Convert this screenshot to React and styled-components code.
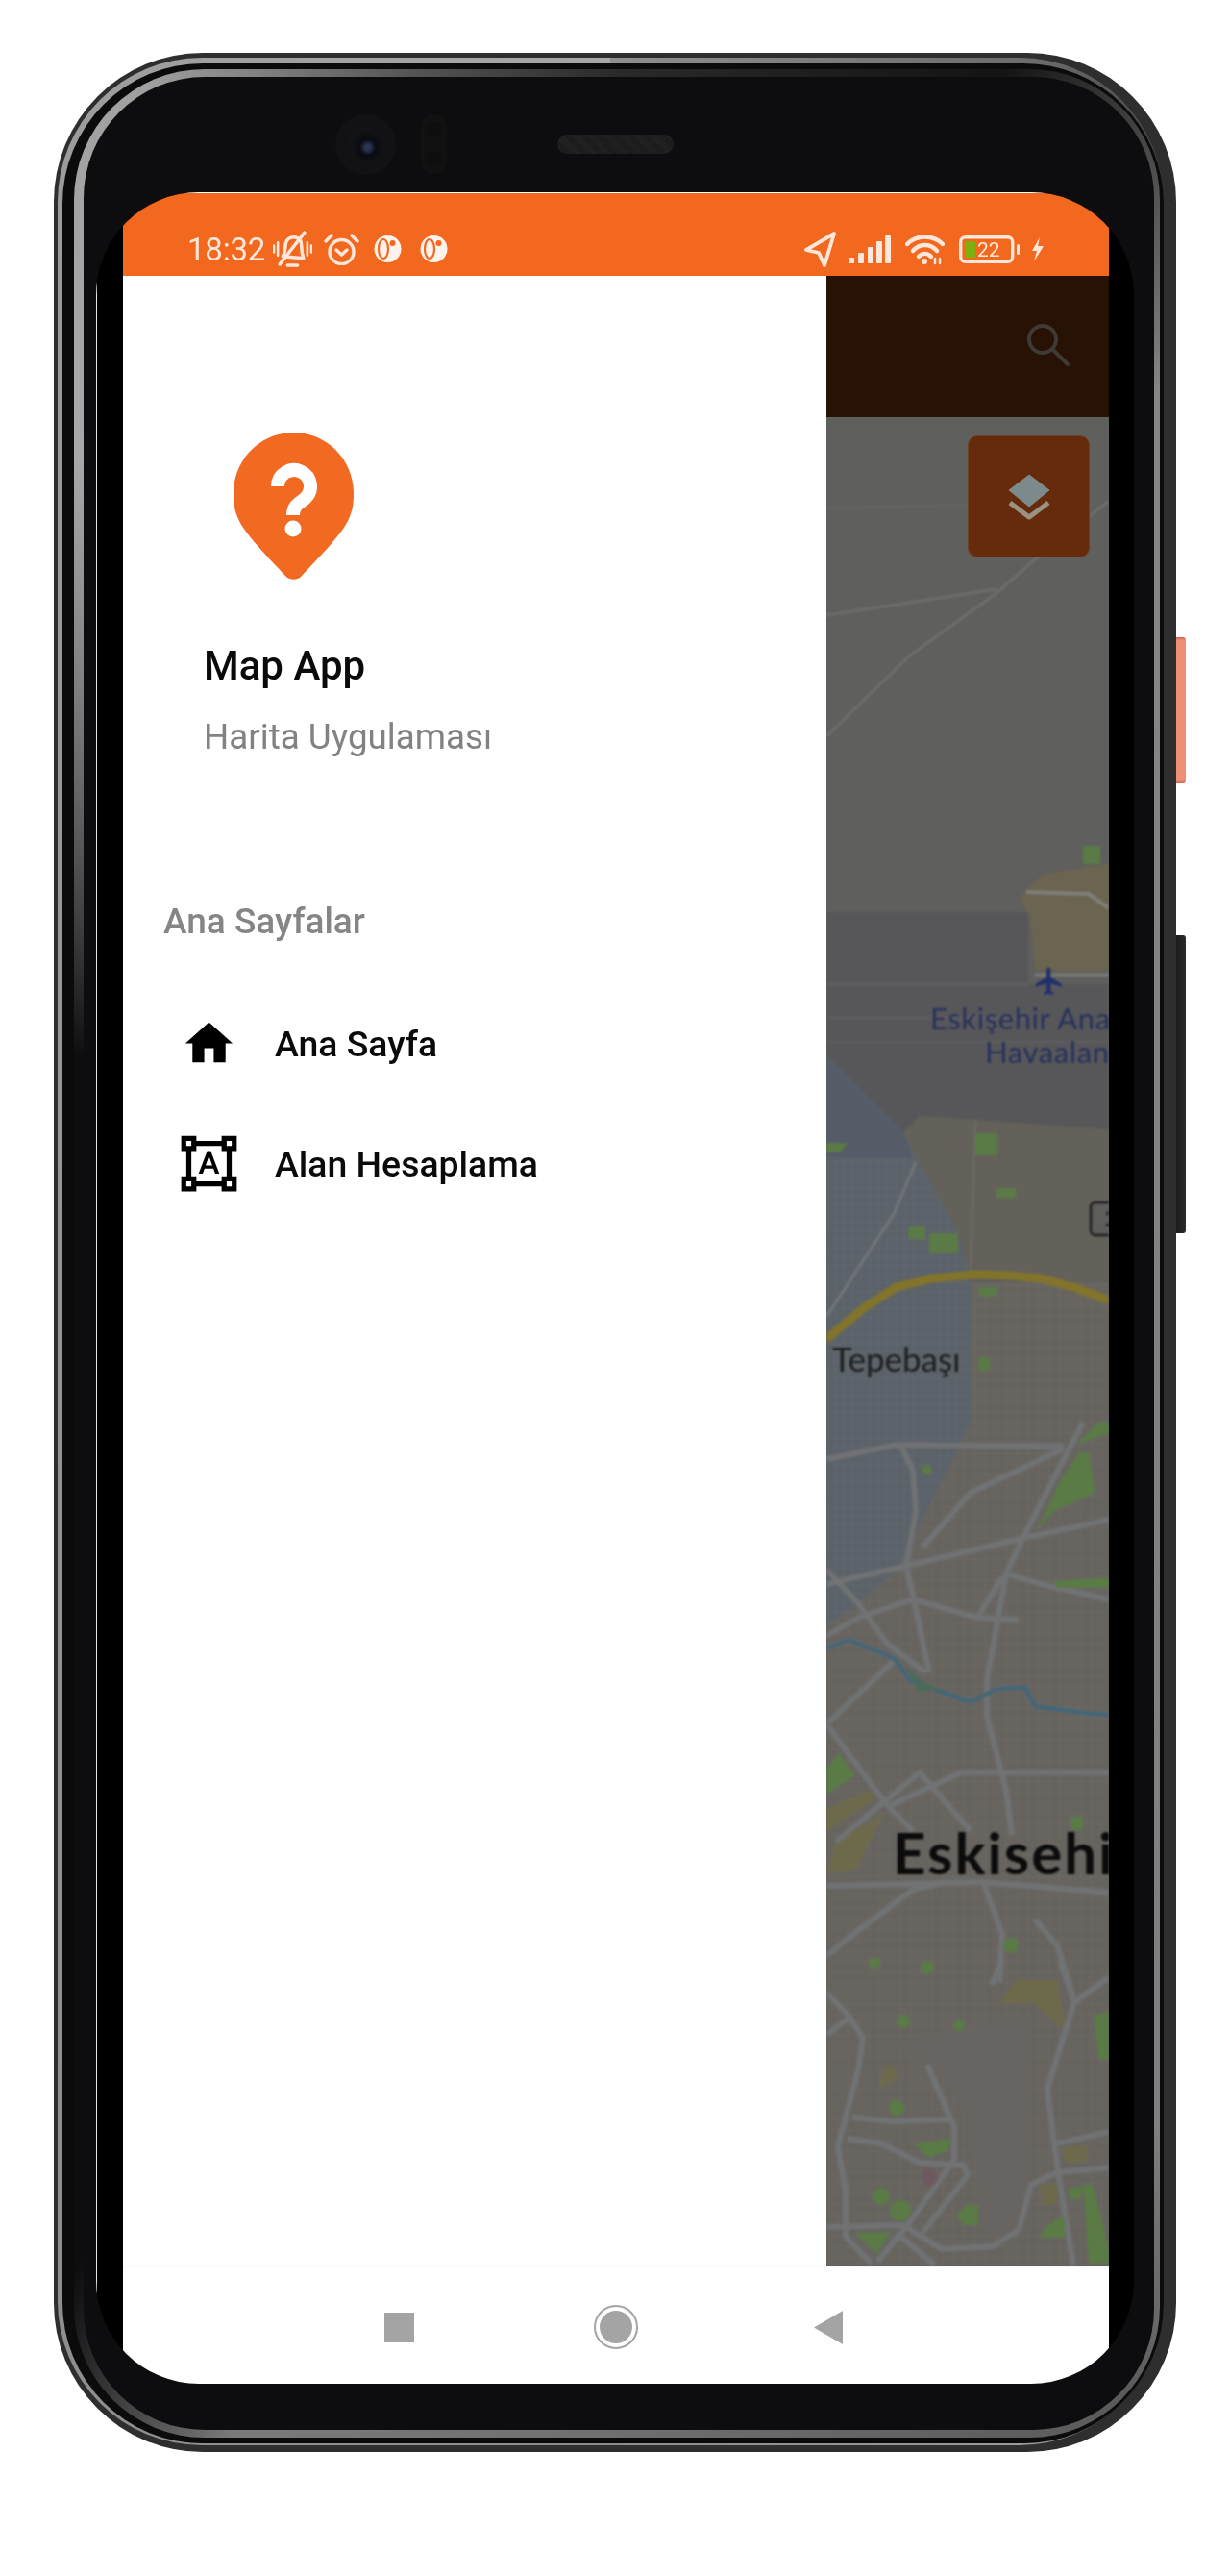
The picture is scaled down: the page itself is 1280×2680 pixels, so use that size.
import React from "react";
import styled, { createGlobalStyle } from "styled-components";

const GlobalStyle = createGlobalStyle`
  html, body {
    margin: 0;
    padding: 0;
    background: #fff;
    font-family: Roboto, "Liberation Sans", sans-serif;
  }
  * { box-sizing: border-box; }
`;

const Page = styled.div`
  width: 1280px;
  height: 2680px;
  padding: 55px 0 0 56px;
  overflow: hidden;
`;

/* phone body: nested rings, each with its own thickness per side */
const Shell = styled.div`
  position: relative;
  width: 1168px;
  height: 2496px;
  padding: 5px 13px 7px 4px;
  border-radius: 155px;
  background: #2e2e2e;
`;
const OuterChrome = styled.div`
  height: 100%;
  padding: 6px 0 2px 5px;
  border-radius: 150px;
  background: conic-gradient(
    #8f8f8f 0deg,
    #6a6a6a 20deg,
    #2e2e2e 30deg,
    #2e2e2e 150deg,
    #9a9a9a 160deg,
    #8c8c8c 180deg,
    #9a9a9a 330deg,
    #a8a8a8 360deg
  );
`;
const DarkRing = styled.div`
  height: 100%;
  padding: 6px 4px 6px 12px;
  border-radius: 146px;
  background: #0b0b0c;
`;
const InnerChrome = styled.div`
  height: 100%;
  padding: 8px 6px 8px 10px;
  border-radius: 136px;
  background: conic-gradient(
    #2a2a2a 0deg,
    #141414 18deg,
    #4a4a4a 26deg,
    #858585 32deg,
    #808080 148deg,
    #5a5a5a 156deg,
    #6f6f6f 180deg,
    #7a7a7a 198deg,
    #0d0d0f 208deg,
    #0d0d0f 290deg,
    #a8a8a8 326deg,
    #a0a0a0 338deg,
    #555 350deg,
    #2a2a2a 360deg
  );
`;
const Bezel = styled.div`
  height: 100%;
  padding: 0 21px 48px 13px;
  border-radius: 126px;
  background: #0d0d0f;
`;

const SideKey = styled.div`
  position: absolute;
  left: 100%;
  top: ${(p) => p.$top}px;
  width: 10px;
  height: ${(p) => p.$height}px;
  border-radius: 0 3px 3px 0;
  background: ${(p) => p.$bg};
`;

const TopBar = styled.div`
  display: flex;
  align-items: center;
  height: 120px;
  padding: 20px 0 0 249px;
`;
const CameraHousing = styled.div`
  display: flex;
  align-items: center;
  justify-content: center;
  width: 63px;
  height: 63px;
  border-radius: 50%;
  background: #121214;
`;
const Lens = styled.div`
  width: 34px;
  height: 34px;
  border-radius: 50%;
  background: radial-gradient(circle at 55% 60%, #2a3555 0 10%, #0a0b10 30%, #1b1b20 100%);
`;
const Sensor = styled.div`
  display: flex;
  flex-direction: column;
  align-items: center;
  justify-content: space-around;
  width: 27px;
  height: 62px;
  margin-left: 26px;
  border-radius: 14px;
  background: #111112;
`;
const SensorDot = styled.div`
  width: 16px;
  height: 16px;
  border-radius: 50%;
  background: #0e0e0f;
`;
const Speaker = styled.div`
  width: 121px;
  height: 20px;
  margin-left: 115px;
  border-radius: 10px;
  background: repeating-linear-gradient(45deg, #232323 0 1px, #191919 1px 2px);
`;

const Display = styled.div`
  width: 1080px;
  height: 2280px;
  padding: 0 26px 0 28px;
  border-radius: 107px;
  overflow: hidden;
  background: linear-gradient(#e6e6e6, #e6e6e6) 0 0 / 1px 100% no-repeat, #000;
`;
const Screen = styled.div`
  display: flex;
  flex-direction: column;
  height: 100%;
  background: #fff;
  filter: blur(0.5px);
`;

const StatusBar = styled.div`
  display: flex;
  align-items: center;
  flex: 0 0 87px;
  padding: 30px 67px 0 67px;
  border-top: 1px solid #fff;
  background: #f3681f;
  color: #fde7db;
`;
const Clock = styled.span`
  font-size: 33px;
  line-height: 1;
  width: 78px;
  letter-spacing: -0.2px;
`;
const StatusIcon = styled.svg`
  flex: none;
  display: block;
  margin-left: ${(p) => p.$gap}px;
  fill: none;
  stroke: #fde7db;
  stroke-linecap: round;
  stroke-linejoin: round;
`;
const StatusSpacer = styled.div`
  flex: 1;
`;

const Body = styled.div`
  display: flex;
  flex: 1;
  min-height: 0;
`;

const Drawer = styled.aside`
  flex: 0 0 732px;
  padding-top: 163px;
  background: #fff;
`;
const Logo = styled.svg`
  display: block;
  margin-left: 115px;
`;
const AppName = styled.div`
  margin: 65px 0 0 84px;
  font-size: 42px;
  line-height: 50px;
  font-weight: 500;
  color: #0a0a0a;
`;
const AppTagline = styled.div`
  margin: 27px 0 0 84px;
  font-size: 36.8px;
  line-height: 44px;
  color: #828282;
`;
const SectionLabel = styled.div`
  margin: 148px 0 42px 42px;
  font-size: 37px;
  line-height: 44px;
  font-weight: 500;
  color: #858585;
`;
const NavItem = styled.div`
  display: flex;
  align-items: center;
  height: 125px;
  padding-left: 59px;
  font-size: 37.4px;
  font-weight: 500;
  color: #0a0a0a;
`;
const NavIconSlot = styled.div`
  display: flex;
  align-items: center;
  justify-content: center;
  flex: 0 0 60px;
  min-width: 0;
  margin-right: 39px;
`;
const NavGlyph = styled.svg`
  display: block;
  flex: none;
  fill: #000;
`;

const Backdrop = styled.div`
  display: flex;
  flex-direction: column;
  flex: 1;
  min-width: 0;
`;
const MapHeader = styled.div`
  display: flex;
  align-items: flex-start;
  justify-content: flex-end;
  flex: 0 0 147px;
  padding: 48px 37px 0 0;
  background: #281206;
`;
const SearchGlyph = styled.svg`
  display: block;
  fill: none;
  stroke: #3f3a35;
  stroke-width: 4;
  stroke-linecap: round;
`;
const MapArea = styled.div`
  position: relative;
  flex: 1;
  overflow: hidden;
  background: #5f5f5d;
`;
const MapCanvas = styled.svg`
  display: block;
  filter: blur(0.8px);
`;
const LayerButton = styled.div`
  position: absolute;
  top: 20px;
  right: 21px;
  display: flex;
  align-items: center;
  justify-content: center;
  width: 125px;
  height: 125px;
  border-radius: 9px;
  background: #652b0c;
  box-shadow: 0 0 0 1px #6e4024;
`;
const PlaceLabel = styled.text`
  font-family: Lato, "Noto Sans", sans-serif;
  font-size: ${(p) => p.$size}px;
  font-weight: ${(p) => p.$weight || 400};
  letter-spacing: ${(p) => p.$spacing || 0}px;
  fill: ${(p) => p.$color};
`;

const SystemBar = styled.div`
  display: flex;
  align-items: center;
  flex: 0 0 123px;
  padding: 3px 0 0 272px;
  border-top: 2px solid #f8f8f8;
  background: #fff;
`;
const StopKey = styled.div`
  width: 31px;
  height: 31px;
  background: #a4a4a4;
`;
const HomeKey = styled.div`
  display: flex;
  align-items: center;
  justify-content: center;
  width: 46px;
  height: 46px;
  margin-left: 187px;
  border-radius: 50%;
  border: 2px solid #a4a4a4;
`;
const HomeKeyDot = styled.div`
  width: 34px;
  height: 34px;
  border-radius: 50%;
  background: #a4a4a4;
`;
const BackKey = styled.svg`
  display: block;
  margin-left: 183px;
  fill: #a4a4a4;
`;

const majorRoads = [
  "0,1084 73,1069 247,1071",
  "77,1069 90,1096 93,1138 83,1195 90,1226 107,1306",
  "267,1046 207,1161 187,1203 167,1314 167,1352 187,1429 193,1475",
  "247,1073 150,1119 100,1176",
  "0,1214 83,1195 197,1168 294,1147",
  "187,1203 223,1214 294,1230",
  "183,1207 157,1249",
  "90,1230 157,1249 200,1251",
  "0,1268 33,1249 90,1230",
  "0,1199 33,1234 63,1276 103,1306",
  "0,1360 73,1291",
  "0,1360 63,1444 90,1471",
  "10,1482 97,1410 150,1471",
  "67,1444 140,1410 294,1410",
  "0,1528 163,1524 294,1535",
  "163,1524 183,1578 180,1628",
  "0,1601 23,1582 90,1532 123,1524",
  "217,1563 240,1590 257,1643",
  "0,1639 23,1663 38,1686 33,1719 20,1769 12,1799 20,1846 20,1893 47,1921",
  "0,1683 23,1666",
  "27,1769 70,1773 127,1771",
  "105,1714 133,1779 133,1813 83,1883 53,1919",
  "22,1791 57,1796 97,1816 143,1819 147,1829 100,1889",
  "0,1883 80,1881 120,1906 173,1903 200,1886 213,1839 240,1826 294,1821",
  "243,1606 258,1649 230,1739 240,1819 257,1923",
  "258,1649 294,1623",
  "240,1796 294,1784",
  "183,1606 172,1631",
  "73,1889 113,1923",
];

const parks = [
  "263,1077 273,1077 280,1119 237,1138 220,1157 243,1107",
  "283,1046 294,1046 294,1057 260,1069",
  "237,1211 294,1207 294,1218 240,1218",
  "0,1406 13,1390 30,1413 0,1433",
  "90,1796 130,1791 127,1803 107,1811",
  "135,1871 147,1859 158,1861 158,1881 143,1881",
  "30,1889 67,1888 52,1911",
  "267,1839 277,1838 294,1906 294,1921 273,1921",
  "278,1663 294,1658 294,1709 283,1709",
  "252,1843 267,1841 265,1853 253,1855",
  "237,1876 248,1873 248,1894 223,1894 223,1889",
  "267,446 285,446 285,465 267,465",
  "155,745 178,745 178,768 155,768",
  "177,802 197,802 197,812 177,812",
  "85,842 103,842 103,855 85,855",
  "107,849 137,849 137,870 107,870",
  "158,905 180,905 175,915 160,915",
  "158,978 170,978 170,992 158,992",
  "0,755 22,755 15,765 0,765",
  "255,1456 267,1456 267,1470 255,1470",
];

const parkDots = [
  [80, 1669, 7],
  [138, 1673, 6],
  [73, 1759, 8],
  [57, 1851, 9],
  [77, 1866, 11],
  [105, 1613, 7],
  [50, 1608, 6],
  [192, 1590, 8],
  [105, 1095, 5],
];

const oliveAreas = [
  "0,1448 43,1429 53,1436 0,1471",
  "10,1482 60,1452 30,1512 0,1515",
  "197,1626 240,1626 250,1680 215,1650 180,1650",
  "60,1715 72,1716 73,1730 55,1738",
  "222,1840 240,1838 240,1860 225,1860",
  "245,1800 272,1798 272,1814 248,1816",
];

const SearchIcon = () => (
  <SearchGlyph width="50" height="50" viewBox="0 0 50 50">
    <circle cx="18" cy="18" r="14" />
    <line x1="28" y1="28" x2="44" y2="44" />
  </SearchGlyph>
);

const LayersIcon = () => (
  <svg width="44" height="48" viewBox="0 0 44 48">
    <polygon points="22,1 43,17 22,34 1,17" fill="#7d8a8b" stroke="#7d8a8b" strokeLinejoin="round" />
    <polyline points="2,30 22,45 42,30" fill="none" stroke="#9c9284" strokeWidth="5" strokeLinejoin="round" />
  </svg>
);

const CallIndicator = ({ gap }) => (
  <StatusIcon $gap={gap} width="31" height="28" viewBox="0 0 31 28" strokeWidth="0">
    <circle cx="15.5" cy="14" r="14" fill="#fdf3ec" />
    <ellipse cx="11" cy="14" rx="5" ry="10" fill="#fdf3ec" stroke="#f3681f" strokeWidth="2.2" />
    <circle cx="20.5" cy="8" r="3" fill="#f3681f" />
  </StatusIcon>
);

const MapDrawing = () => (
  <MapCanvas width="294" height="1923" viewBox="0 0 294 1923">
    <defs>
      <pattern id="tan-streets" width="11" height="11" patternUnits="userSpaceOnUse">
        <rect width="11" height="11" fill="#676460" />
        <path d="M0 0H11M0 0V11" stroke="#726f6b" strokeWidth="1" />
      </pattern>
      <pattern id="blue-streets" width="9" height="9" patternUnits="userSpaceOnUse">
        <rect width="9" height="9" fill="#5b6269" />
        <path d="M0 0H9M0 0V9" stroke="#686d72" strokeWidth="1" />
      </pattern>
    </defs>
    {/* open land, airport and terminal */}
    <polygon points="0,515 210,515 210,590 294,590 294,741 97,727 80,744 0,664" fill="#57575a" />
    <polygon points="200,500 225,475 294,465 294,576 217,576 212,520" fill="#6a6450" />
    <line x1="0" y1="590" x2="210" y2="590" stroke="#606064" strokeWidth="3" />
    <line x1="0" y1="625" x2="210" y2="625" stroke="#5e5e62" strokeWidth="3" />
    <line x1="0" y1="650" x2="294" y2="650" stroke="#5e5e62" strokeWidth="2" />
    <polygon points="97,727 294,741 294,900 150,894 137,848 80,744" fill="#64615a" />
    <rect x="0" y="900" width="294" height="1023" fill="url(#tan-streets)" />
    <polygon points="0,664 80,744 137,848 150,894 150,1046 140,1069 73,1199 30,1237 0,1256" fill="url(#blue-streets)" />
    <polygon points="0,664 80,744 90,770 0,770" fill="#555c68" />
    <polygon points="67,1690 213,1663 213,1885 165,1890 150,1770 105,1710" fill="#686461" />

    {/* thin upper tracks */}
    <polyline points="0,95 147,91" fill="none" stroke="#666664" strokeWidth="2" />
    <polyline points="0,206 177,179" fill="none" stroke="#6d6d6b" strokeWidth="3" />
    <polyline points="0,332 87,248 177,183 217,148 294,87" fill="none" stroke="#6d6d6b" strokeWidth="3" />
    <polyline points="208,494 273,496 294,511" fill="none" stroke="#7f7f7a" strokeWidth="4" />
    <polyline points="217,580 294,580" fill="none" stroke="#7a7a76" strokeWidth="3" />
    <polyline points="93,775 70,829 0,936" fill="none" stroke="#737578" strokeWidth="3" />
    <polyline points="155,730 150,890" fill="none" stroke="#6e6b65" strokeWidth="2" />

    {oliveAreas.map((points) => (
      <polygon key={points} points={points} fill="#6d6a4c" />
    ))}
    {majorRoads.map((points) => (
      <polyline key={points} points={points} fill="none" stroke="#707274" strokeWidth="6" strokeLinejoin="round" />
    ))}
    {parks.map((points) => (
      <polygon key={points} points={points} fill="#5a7a46" />
    ))}
    {parkDots.map(([cx, cy, r]) => (
      <circle key={`${cx}-${cy}`} cx={cx} cy={cy} r={r} fill="#5a7a46" />
    ))}
    <circle cx="107" cy="1831" r="9" fill="#6d5a60" />

    {/* river */}
    <polyline
      points="0,1281 23,1272 70,1291 87,1314 117,1325 150,1337 177,1323 207,1322 217,1341 267,1348 294,1350"
      fill="none"
      stroke="#40677a"
      strokeWidth="4"
      strokeLinejoin="round"
    />
    <polygon points="83,1300 100,1315 120,1325 95,1325" fill="#4a6a5c" />

    {/* ring road */}
    <polyline points="0,959 40,926 73,905 110,896 153,892 190,893 223,896 260,906 294,919" fill="none" stroke="#82742a" strokeWidth="9" strokeLinejoin="round" />

    {/* road shield, cut off by the screen edge */}
    <rect x="275" y="817" width="30" height="34" rx="5" fill="#5d5d5c" stroke="#1d1d1d" strokeWidth="2.5" />
    <PlaceLabel x="290" y="842" $size={22} $weight={700} $color="#1d1d1d">2</PlaceLabel>

    {/* airport */}
    <svg x="215" y="570" width="34" height="34" viewBox="0 0 24 24">
      <path
        fill="#1f2f6d"
        d="M21 16v-2l-8-5V3.5c0-.83-.67-1.5-1.5-1.5S10 2.67 10 3.5V9l-8 5v2l8-2.5V19l-2 1.5V22l3.5-1 3.5 1v-1.5L13 19v-5.5l8 2.5z"
      />
    </svg>
    <PlaceLabel x="108" y="637" $size={31} $spacing={0.6} $color="#27315c">Eskişehir Ana</PlaceLabel>
    <PlaceLabel x="165" y="672" $size={31} $spacing={0.6} $color="#27315c">Havaalan</PlaceLabel>
    <PlaceLabel x="6" y="993" $size={35} $color="#1d1d1d">Tepebaşı</PlaceLabel>
    <PlaceLabel x="69" y="1516" $size={60} $weight={700} $spacing={2} $color="#0b0b0b">Eskisehi</PlaceLabel>
  </MapCanvas>
);

const App = () => (
  <>
    <GlobalStyle />
    <Page>
      <Shell>
        <SideKey $top={608} $height={152} $bg="linear-gradient(#c9614a 0, #ef8f74 2%, #ef8f74 98%, #c9614a 100%)" />
        <SideKey $top={918} $height={310} $bg="linear-gradient(90deg, #1d1d1d, #2c2c2c)" />
        <OuterChrome>
          <DarkRing>
            <InnerChrome>
              <Bezel>
                <TopBar>
                  <CameraHousing>
                    <Lens />
                  </CameraHousing>
                  <Sensor>
                    <SensorDot />
                    <SensorDot />
                  </Sensor>
                  <Speaker />
                </TopBar>
                <Display>
                  <Screen>
                    <StatusBar>
                      <Clock>18:32</Clock>
                      <StatusIcon $gap={11} width="41" height="38" viewBox="0 0 40 37" strokeWidth="3.4">
                        <path d="M10 26 C14 20 11 13 15 9 C19 5 25 6 28 10 C30 14 28 20 31 28 Z" />
                        <line x1="7" y1="34" x2="32" y2="2" />
                        <line x1="15" y1="35" x2="25" y2="35" />
                        <path d="M1 15V22M5 12V25M35 12V25M39 15V22" strokeWidth="2.5" />
                      </StatusIcon>
                      <StatusIcon $gap={12} width="37" height="34" viewBox="0 0 37 34" strokeWidth="3.4">
                        <circle cx="18.5" cy="20" r="12.5" />
                        <path d="M2 9L8 3M29 3L35 9" />
                        <path d="M13 18L18.5 23L24 18" />
                      </StatusIcon>
                      <CallIndicator gap={14} />
                      <CallIndicator gap={17} />
                      <StatusSpacer />
                      <StatusIcon $gap={0} width="33" height="37" viewBox="0 0 33 37" strokeWidth="3.8">
                        <polygon points="31,2 2,19 15,22 21,35" />
                      </StatusIcon>
                      <StatusIcon $gap={13} width="44" height="29" viewBox="0 0 44 29" strokeWidth="0">
                        <g fill="#fde7db">
                          <rect x="0" y="23" width="6" height="6" rx="1" />
                          <rect x="10" y="18" width="6" height="11" rx="1" />
                          <rect x="20" y="12" width="6" height="17" rx="1" />
                          <rect x="29" y="6" width="6" height="23" rx="1" />
                          <rect x="38" y="0" width="6" height="29" rx="1" />
                        </g>
                      </StatusIcon>
                      <StatusIcon $gap={15} width="41" height="33" viewBox="0 0 41 33" strokeWidth="4.4">
                        <path d="M2 11C12 1 29 1 39 11" />
                        <path d="M8 18C15 10 26 10 33 18" />
                        <path d="M14 24C18 20 23 20 27 24" />
                        <circle cx="20" cy="29" r="3" fill="#fde7db" strokeWidth="0" />
                        <path d="M31 26V31M36 26V31" strokeWidth="2.5" />
                      </StatusIcon>
                      <StatusIcon $gap={15} width="65" height="29" viewBox="0 0 65 29" strokeWidth="3.4">
                        <rect x="1.7" y="1.7" width="54" height="25.6" rx="5" />
                        <rect x="6" y="6" width="11" height="17" fill="#7db00e" strokeWidth="0" />
                        <text x="19" y="22" fontFamily="Roboto, sans-serif" fontSize="21" fill="#fde7db" strokeWidth="0">
                          22
                        </text>
                        <rect x="60" y="9" width="3" height="11" rx="1.5" fill="#fde7db" strokeWidth="0" />
                      </StatusIcon>
                      <StatusIcon $gap={9} width="15" height="25" viewBox="0 0 15 25" strokeWidth="0">
                        <polygon points="10,0 2,14 7,14 4,25 14,9 8,9" fill="#fde7db" />
                      </StatusIcon>
                    </StatusBar>
                    <Body>
                      <Drawer>
                        <Logo width="125" height="153" viewBox="0 0 125 153">
                          <path
                            fill="#f26a22"
                            d="M62.5 0C28 0 0 28 0 63C0 74 1 82 6 92C14 108 40 134 54 149C58 154 67 154 71 149C85 134 111 108 119 92C124 82 125 74 125 63C125 28 97 0 62.5 0Z"
                          />
                          <path
                            fill="none"
                            stroke="#fff"
                            strokeWidth="14"
                            d="M46 56A17 17 0 1 1 74 69C67 74 62 77 62 86"
                          />
                          <circle cx="62" cy="100" r="8.5" fill="#fff" />
                        </Logo>
                        <AppName>Map App</AppName>
                        <AppTagline>Harita Uygulaması</AppTagline>
                        <SectionLabel>Ana Sayfalar</SectionLabel>
                        <NavItem>
                          <NavIconSlot>
                            <NavGlyph width="59" height="59" viewBox="0 0 24 24">
                              <path d="M10 20v-6h4v6h5v-8h3L12 3 2 12h3v8z" />
                            </NavGlyph>
                          </NavIconSlot>
                          Ana Sayfa
                        </NavItem>
                        <NavItem>
                          <NavIconSlot>
                            <NavGlyph width="63" height="63" viewBox="0 0 24 24">
                              <path d="M23 7V1h-6v2H7V1H1v6h2v10H1v6h6v-2h10v2h6v-6h-2V7h2zM3 3h2v2H3V3zm2 18H3v-2h2v2zm12-2H7v-2H5V7h2V5h10v2h2v10h-2v2zm4 2h-2v-2h2v2zM19 5V3h2v2h-2zm-5.27 9h-3.49l-.73 2H7.89l3.4-9h1.4l3.41 9h-1.63l-.74-2zm-3.04-1.26h2.61L12 8.91l-1.31 3.83z" />
                            </NavGlyph>
                          </NavIconSlot>
                          Alan Hesaplama
                        </NavItem>
                      </Drawer>
                      <Backdrop>
                        <MapHeader>
                          <SearchIcon />
                        </MapHeader>
                        <MapArea>
                          <MapDrawing />
                          <LayerButton>
                            <LayersIcon />
                          </LayerButton>
                        </MapArea>
                      </Backdrop>
                    </Body>
                    <SystemBar>
                      <StopKey />
                      <HomeKey>
                        <HomeKeyDot />
                      </HomeKey>
                      <BackKey width="30" height="35" viewBox="0 0 30 35">
                        <polygon points="30,0 30,35 0,17.5" />
                      </BackKey>
                    </SystemBar>
                  </Screen>
                </Display>
              </Bezel>
            </InnerChrome>
          </DarkRing>
        </OuterChrome>
      </Shell>
    </Page>
  </>
);

export default App;
